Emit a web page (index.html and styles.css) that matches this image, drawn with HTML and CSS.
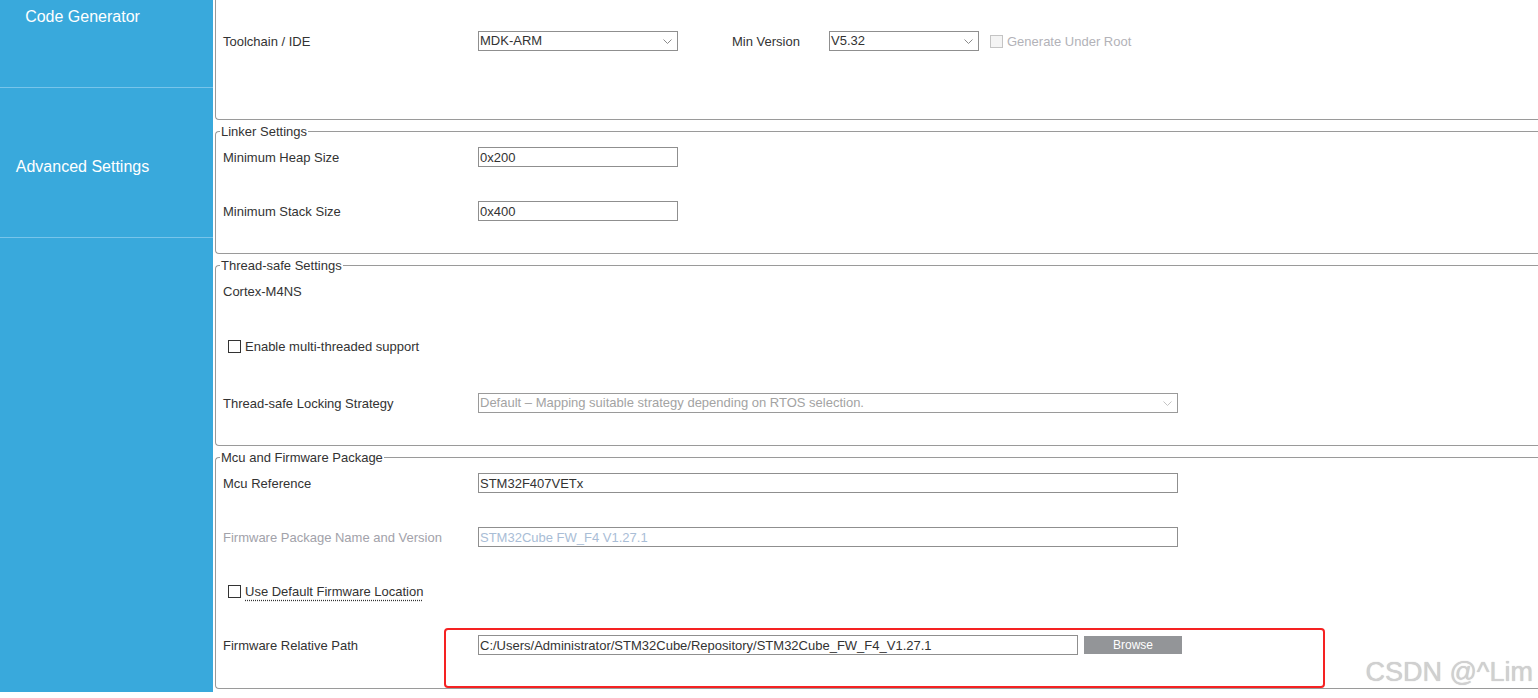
FILE: index.html
```html
<!DOCTYPE html>
<html lang="en">
<head>
<meta charset="utf-8">
<title>Project Manager - Code Generator</title>
<link rel="stylesheet" href="styles.css">
</head>
<body>
<div class="app">
  <nav class="sidebar">
    <div class="nav-item">Code Generator</div>
    <div class="nav-item">Advanced Settings</div>
  </nav>
  <main class="content">
    <section class="panel-top">
      <div class="row">
        <span class="label">Toolchain / IDE</span>
        <div class="select w-short"><span class="select-text">MDK-ARM</span><svg class="chev" width="9" height="5" viewBox="0 0 9 5"><path d="M0.5 0.5 L4.5 4.5 L8.5 0.5" fill="none" stroke="#8a8a8a" stroke-width="1"/></svg></div>
        <span class="label-inline">Min Version</span>
        <div class="select w-ver"><span class="select-text">V5.32</span><svg class="chev" width="9" height="5" viewBox="0 0 9 5"><path d="M0.5 0.5 L4.5 4.5 L8.5 0.5" fill="none" stroke="#8a8a8a" stroke-width="1"/></svg></div>
        <span class="check check-disabled"><span class="box"></span><span class="check-text">Generate Under Root</span></span>
      </div>
    </section>

    <fieldset class="group group-linker">
      <legend>Linker Settings</legend>
      <div class="rows">
        <div class="row">
          <span class="label">Minimum Heap Size</span>
          <input class="field w-short" type="text" value="0x200">
        </div>
        <div class="row">
          <span class="label">Minimum Stack Size</span>
          <input class="field w-short" type="text" value="0x400">
        </div>
      </div>
    </fieldset>

    <fieldset class="group group-thread">
      <legend>Thread-safe Settings</legend>
      <div class="rows">
        <div class="row">
          <span class="label">Cortex-M4NS</span>
        </div>
        <div class="row row-check">
          <span class="check"><span class="box"></span><span class="check-text">Enable multi-threaded support</span></span>
        </div>
        <div class="row row-strategy">
          <span class="label">Thread-safe Locking Strategy</span>
          <div class="select select-disabled w-long"><span class="select-text">Default – Mapping suitable strategy depending on RTOS selection.</span><svg class="chev" width="9" height="5" viewBox="0 0 9 5"><path d="M0.5 0.5 L4.5 4.5 L8.5 0.5" fill="none" stroke="#c4c4c4" stroke-width="1"/></svg></div>
        </div>
      </div>
    </fieldset>

    <fieldset class="group group-mcu">
      <legend>Mcu and Firmware Package</legend>
      <div class="rows">
        <div class="row">
          <span class="label">Mcu Reference</span>
          <input class="field w-long" type="text" value="STM32F407VETx">
        </div>
        <div class="row">
          <span class="label label-disabled">Firmware Package Name and Version</span>
          <input class="field field-disabled w-long" type="text" value="STM32Cube FW_F4 V1.27.1" disabled>
        </div>
        <div class="row row-check">
          <span class="check"><span class="box"></span><span class="check-text focused">Use Default Firmware Location</span></span>
        </div>
        <div class="row row-path">
          <span class="label">Firmware Relative Path</span>
          <input class="field w-path" type="text" value="C:/Users/Administrator/STM32Cube/Repository/STM32Cube_FW_F4_V1.27.1">
          <button class="browse" type="button">Browse</button>
          <div class="highlight"></div>
        </div>
      </div>
    </fieldset>
  </main>
</div>
<div class="watermark">CSDN @^Lim</div>
</body>
</html>
```

FILE: styles.css
```css
* { box-sizing: border-box; }

html, body {
  margin: 0;
  padding: 0;
  width: 1538px;
  height: 698px;
  overflow: hidden;
  background: #ffffff;
  font-family: "Liberation Sans", Arial, sans-serif;
  font-size: 13px;
  color: #333333;
}

.app {
  display: flex;
  gap: 2px;
  height: 698px;
}

/* ---------- sidebar ---------- */
.sidebar {
  flex: none;
  width: 213px;
  height: 692px;
  background: #39a9dc;
  overflow: hidden;
}

.nav-item {
  height: 150px;
  padding: 8px 48px 0 0;
  border-bottom: 1px solid #78c4ea;
  display: flex;
  align-items: center;
  justify-content: center;
  color: #ffffff;
  font-size: 16px;
  white-space: nowrap;
}

.nav-item:first-child {
  margin-top: -62px;
}

/* ---------- content ---------- */
.content {
  flex: 1;
  min-width: 0;
  display: flex;
  flex-direction: column;
}

.panel-top {
  height: 120px;
  padding-top: 31px;
  border: 1px solid #9a9a9a;
  border-top: none;
  border-right: none;
  border-bottom-left-radius: 4px;
}

.group {
  margin: 3px 0 0 0;
  padding: 0;
  min-width: 0;
  border: 1px solid #9a9a9a;
  border-right: none;
  border-radius: 4px 0 0 4px;
}

.group legend {
  margin-left: 4px;
  padding: 0 1px;
  font-size: 13px;
  line-height: 17px;
  color: #333333;
}

.rows {
  display: flex;
  flex-direction: column;
  gap: 34px;
  padding: 7px 0 32px 0;
}

.group-thread .row-check { margin-top: 1px; }
.group-thread .row-strategy { margin-top: 3px; }
.group-mcu .rows { padding-bottom: 33px; }

.row {
  position: relative;
  display: flex;
  align-items: center;
  height: 20px;
  padding-left: 7px;
  white-space: nowrap;
}

.label {
  flex: none;
  width: 255px;
}

.label-disabled { color: #a2a2aa; }

.label-inline {
  margin-left: 54px;
  width: 97px;
  flex: none;
}

/* ---------- inputs ---------- */
.field, .select {
  flex: none;
  height: 20px;
  border: 1px solid #8f8f8f;
  padding: 0 1px;
  font-family: "Liberation Sans", Arial, sans-serif;
  font-size: 13px;
  color: #333333;
  background: #ffffff;
  outline: none;
  border-radius: 0;
}

.field-disabled {
  color: #a9bdd6;
  -webkit-text-fill-color: #a9bdd6;
}

.select {
  display: flex;
  align-items: center;
  justify-content: space-between;
  padding-right: 5px;
}

.select-text { line-height: 18px; }

.select-disabled {
  color: #a3a3a3;
  border-color: #9a9a9a;
}

.chev { flex: none; }

.w-short { width: 200px; }
.w-ver { width: 150px; }
.w-long { width: 700px; }
.w-path { width: 600px; }

/* ---------- checkboxes ---------- */
.check {
  display: flex;
  align-items: center;
  gap: 4px;
}

.row-check .check { margin-left: 5px; }

.box {
  width: 13px;
  height: 13px;
  border: 1px solid #333333;
  background: #ffffff;
}

.check-disabled {
  margin-left: 11px;
  color: #b2b2b8;
}

.check-disabled .box {
  border-color: #c4c4c4;
  background: #f4f4f4;
}

.focused {
  text-decoration: underline dotted #333333;
  text-underline-offset: 4px;
}

/* ---------- browse ---------- */
.browse {
  flex: none;
  margin-left: 6px;
  width: 98px;
  height: 18px;
  border: none;
  background: #939598;
  color: #ffffff;
  font-family: "Liberation Sans", Arial, sans-serif;
  font-size: 12px;
  padding: 0;
}

/* ---------- annotation overlay ---------- */
.highlight {
  position: absolute;
  left: 228px;
  top: -7px;
  width: 881px;
  height: 60px;
  border: 2px solid #f52222;
  border-radius: 4px;
  pointer-events: none;
}

.watermark {
  position: absolute;
  right: 5px;
  bottom: 11px;
  font-family: "Liberation Sans", Arial, sans-serif;
  font-size: 27px;
  line-height: 30px;
  color: #d0d0d0;
  text-shadow: 0 0 1px rgba(0, 0, 0, 0.25);
}
```
